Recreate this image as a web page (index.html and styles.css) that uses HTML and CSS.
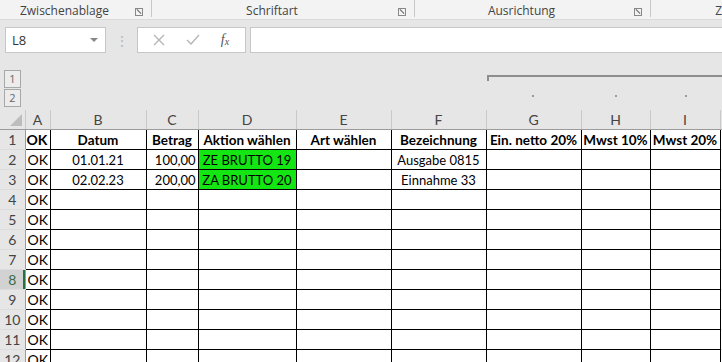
FILE: index.html
```html
<!DOCTYPE html>
<html lang="de">
<head>
    <meta charset="UTF-8">
    <title>Mappe1 - Excel</title>
    <link rel="stylesheet" href="styles.css">
</head>
<body>
<div class="ribbon">
    <div class="group g1"><span class="group-label">Zwischenablage</span><span class="launcher"></span></div>
    <div class="group g2"><span class="group-label">Schriftart</span><span class="launcher"></span></div>
    <div class="group g3"><span class="group-label">Ausrichtung</span><span class="launcher"></span></div>
    <div class="group g4"><span class="group-label">Z</span></div>
</div>

<div class="formula-bar">
    <div class="name-box">
        <span>L8</span>
        <span class="dropdown"></span>
    </div>
    <div class="grip">⋮</div>
    <div class="fx-buttons">
        <svg width="14" height="14" viewBox="0 0 14 14"><path d="M2 2 L12 12 M12 2 L2 12" stroke="#b4b4b4" stroke-width="1.3" fill="none"/></svg>
        <svg width="16" height="14" viewBox="0 0 16 14"><path d="M2 7 L6 11 L14 2" stroke="#b4b4b4" stroke-width="1.3" fill="none"/></svg>
        <span class="fx">f<sub>x</sub></span>
    </div>
    <div class="formula-input"></div>
</div>

<div class="outline">
    <div class="levels">
        <div class="level">1</div>
        <div class="level">2</div>
    </div>
    <div class="outline-group">
        <div class="bracket"></div>
        <div class="dots">
            <span class="dot d-g"></span>
            <span class="dot d-h"></span>
            <span class="dot d-i"></span>
        </div>
    </div>
</div>

<table class="sheet">
    <colgroup>
        <col style="width:25px"><col style="width:25px"><col style="width:96px"><col style="width:52px">
        <col style="width:98px"><col style="width:95px"><col style="width:95px"><col style="width:95px">
        <col style="width:69px"><col style="width:70px"><col style="width:30px">
    </colgroup>
    <thead>
    <tr>
        <th class="corner"><span class="tri"></span></th>
        <th>A</th><th>B</th><th>C</th><th>D</th><th>E</th><th>F</th><th>G</th><th>H</th><th>I</th><th class="col-j"></th>
    </tr>
    </thead>
    <tbody>
    <tr class="title-row">
        <th>1</th>
        <td class="left">OK</td><td>Datum</td><td>Betrag</td><td>Aktion wählen</td><td>Art wählen</td>
        <td>Bezeichnung</td><td>Ein. netto 20%</td><td>Mwst 10%</td><td>Mwst 20%</td><td class="col-j"></td>
    </tr>
    <tr>
        <th>2</th>
        <td class="left">OK</td><td>01.01.21</td><td class="right">100,00</td><td class="green">ZE BRUTTO 19</td><td></td>
        <td>Ausgabe 0815</td><td></td><td></td><td></td><td class="col-j"></td>
    </tr>
    <tr>
        <th>3</th>
        <td class="left">OK</td><td>02.02.23</td><td class="right">200,00</td><td class="green">ZA BRUTTO 20</td><td></td>
        <td>Einnahme 33</td><td></td><td></td><td></td><td class="col-j"></td>
    </tr>
    <tr><th>4</th><td class="left">OK</td><td></td><td></td><td></td><td></td><td></td><td></td><td></td><td></td><td class="col-j"></td></tr>
    <tr><th>5</th><td class="left">OK</td><td></td><td></td><td></td><td></td><td></td><td></td><td></td><td></td><td class="col-j"></td></tr>
    <tr><th>6</th><td class="left">OK</td><td></td><td></td><td></td><td></td><td></td><td></td><td></td><td></td><td class="col-j"></td></tr>
    <tr><th>7</th><td class="left">OK</td><td></td><td></td><td></td><td></td><td></td><td></td><td></td><td></td><td class="col-j"></td></tr>
    <tr><th class="active">8</th><td class="left">OK</td><td></td><td></td><td></td><td></td><td></td><td></td><td></td><td></td><td class="col-j"></td></tr>
    <tr><th>9</th><td class="left">OK</td><td></td><td></td><td></td><td></td><td></td><td></td><td></td><td></td><td class="col-j"></td></tr>
    <tr><th>10</th><td class="left">OK</td><td></td><td></td><td></td><td></td><td></td><td></td><td></td><td></td><td class="col-j"></td></tr>
    <tr><th>11</th><td class="left">OK</td><td></td><td></td><td></td><td></td><td></td><td></td><td></td><td></td><td class="col-j"></td></tr>
    <tr><th>12</th><td class="left">OK</td><td></td><td></td><td></td><td></td><td></td><td></td><td></td><td></td><td class="col-j"></td></tr>
    </tbody>
</table>
</body>
</html>
```

FILE: styles.css
```css
html, body {
    margin: 0;
    padding: 0;
}

body {
    width: 722px;
    height: 362px;
    overflow: hidden;
    background-color: #e6e6e6;
    font-family: "Open Sans", "Noto Sans", sans-serif;
}

/* Ribbon group labels */
.ribbon {
    display: flex;
    height: 20px;
    background-color: #f3f3f3;
    border-bottom: 1px solid #dadada;
    box-sizing: border-box;
}

.group {
    display: flex;
    align-items: center;
    height: 17px;
    border-right: 1px solid #c8c8c8;
    box-sizing: border-box;
}

.g1 { width: 152px; }
.g2 { width: 263px; }
.g3 { width: 236px; }
.g4 { flex: 1; border-right: none; }

.group-label {
    flex: 1;
    text-align: center;
    font-size: 12px;
    color: #444;
    line-height: 17px;
    padding-top: 3px;
}

.g4 .group-label {
    text-align: right;
}

.launcher {
    width: 6px;
    height: 6px;
    border: 1px solid #888;
    margin: 7px 8px 0 6px;
    position: relative;
}

.launcher::after {
    content: "";
    position: absolute;
    left: 0;
    top: 2px;
    width: 6px;
    height: 1px;
    background: #666;
    transform: rotate(45deg);
}

/* Formula bar */
.formula-bar {
    display: flex;
    align-items: center;
    height: 40px;
    padding: 0 0 0 5px;
    box-sizing: border-box;
}

.name-box {
    width: 101px;
    height: 26px;
    box-sizing: border-box;
    background: #fff;
    border: 1px solid #c6c6c6;
    display: flex;
    align-items: center;
    justify-content: space-between;
    padding: 0 7px 0 6px;
    font-size: 13px;
    color: #333;
}

.dropdown {
    width: 0;
    height: 0;
    border-left: 4px solid transparent;
    border-right: 4px solid transparent;
    border-top: 4px solid #888;
}

.grip {
    width: 31px;
    text-align: center;
    color: #b8b8b8;
    font-size: 14px;
}

.fx-buttons {
    width: 109px;
    height: 26px;
    box-sizing: border-box;
    background: #fff;
    border: 1px solid #c6c6c6;
    display: flex;
    align-items: center;
    justify-content: space-around;
    padding: 0 6px 0 4px;
}

.fx {
    font-family: "Liberation Serif", serif;
    font-style: italic;
    font-size: 14px;
    color: #555;
}

.fx sub {
    font-size: 10px;
    vertical-align: -1px;
}

.formula-input {
    flex: 1;
    height: 26px;
    margin-left: 4px;
    box-sizing: border-box;
    background: #fff;
    border: 1px solid #c6c6c6;
    border-right: none;
}

/* Outline area */
.outline {
    display: flex;
    height: 50px;
}

.levels {
    width: 487px;
    padding: 10px 0 0 4px;
    box-sizing: border-box;
}

.level {
    width: 15px;
    height: 16px;
    border: 1px solid #a8a8a8;
    background: #ececec;
    font-size: 11px;
    line-height: 16px;
    text-align: center;
    color: #666;
    margin-bottom: 1px;
}

.outline-group {
    flex: 1;
}

.bracket {
    margin-top: 15px;
    height: 4px;
    border-top: 2px solid #8e8e8e;
    border-left: 2px solid #8e8e8e;
}

.dots {
    position: relative;
    height: 20px;
}

.dot {
    position: absolute;
    top: 14px;
    width: 2px;
    height: 2px;
    background: #9a9a9a;
}

.d-g { left: 45px; }
.d-h { left: 128px; }
.d-i { left: 198px; }

/* Sheet grid */
.sheet {
    border-collapse: collapse;
    table-layout: fixed;
    width: 750px;
    font-family: Lato, "Liberation Sans", sans-serif;
    font-size: 13px;
    color: #000;
    background: #fff;
}

.sheet thead th {
    height: 19px;
    padding: 0;
    font-weight: normal;
    background: #e6e6e6;
    color: #444;
    border-right: 1px solid #c9c9c9;
    border-bottom: 1px solid #9b9b9b;
    font-size: 14px;
    line-height: 18px;
}

.sheet .corner {
    position: relative;
}

.tri {
    position: absolute;
    right: 3px;
    bottom: 3px;
    width: 0;
    height: 0;
    border-left: 12px solid transparent;
    border-bottom: 12px solid #bdbdbd;
}

.sheet tbody th {
    height: 19px;
    padding: 0;
    font-weight: normal;
    font-size: 14px;
    background: #e6e6e6;
    color: #444;
    border-right: 1px solid #9b9b9b;
    border-bottom: 1px solid #dcdcdc;
    text-align: center;
}

.sheet tbody th.active {
    background: #d2d2d2;
    color: #3b6b4b;
    box-shadow: inset -2px 0 0 #217346;
}

.sheet td {
    height: 19px;
    padding: 0 2px;
    border: 1px solid #000;
    text-align: center;
    white-space: nowrap;
    overflow: hidden;
    line-height: 18px;
}

.sheet td.left {
    text-align: left;
    font-size: 14px;
}

.sheet td.right { text-align: right; }

.sheet td.green {
    background: #14e614;
}

.sheet td.col-j {
    border-left: 1px solid #000;
    border-right: none;
    border-top: 1px solid #d4d4d4;
    border-bottom: 1px solid #d4d4d4;
}

.title-row td {
    font-weight: bold;
    font-size: 13.5px;
    padding: 0 1px;
}
```
